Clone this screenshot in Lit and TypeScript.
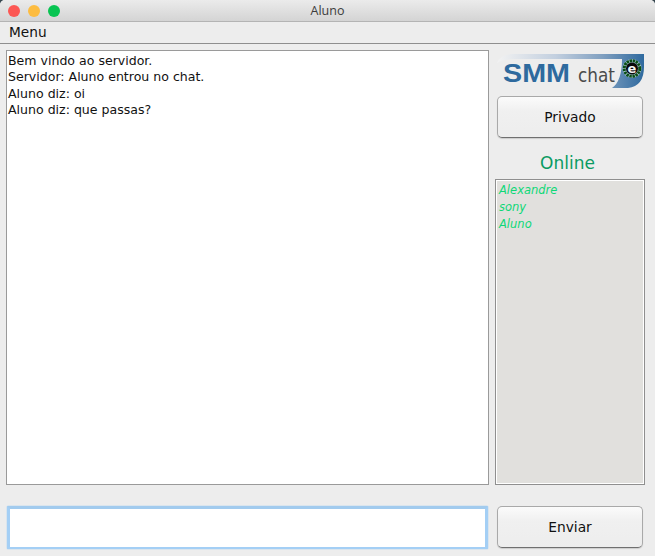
import { LitElement, html, css } from "lit";
import { customElement } from "lit/decorators.js";

@customElement("app-root")
export class AppRoot extends LitElement {
  static styles = css`
    :host {
      display: block;
      width: 655px;
      height: 556px;
      background: #37474f;
      font-family: "DejaVu Sans", "Open Sans", sans-serif;
      font-size: 12.5px;
      color: #111;
      overflow: hidden;
    }
    .window {
      height: 556px;
      display: flex;
      flex-direction: column;
      background: #ededed;
      border-radius: 5px 5px 0 0;
      overflow: hidden;
    }
    .titlebar {
      height: 22px;
      box-sizing: border-box;
      flex: none;
      display: flex;
      align-items: center;
      position: relative;
      padding-left: 8px;
      gap: 8px;
      background: linear-gradient(#ebebeb, #d4d4d4);
      border-bottom: 1px solid #b4b4b4;
    }
    .light { width: 12px; height: 12px; border-radius: 50%; }
    .red { background: #fc5753; }
    .yellow { background: #fdbc40; }
    .green { background: #08c452; }
    .title {
      position: absolute;
      left: 0;
      right: 0;
      text-align: center;
      font-family: "Open Sans", "DejaVu Sans", sans-serif;
      font-size: 12.5px;
      color: #3c3c3c;
    }
    .menubar {
      height: 22px;
      box-sizing: border-box;
      flex: none;
      padding: 2px 0 0 9px;
      font-size: 13.7px;
      line-height: 17px;
      border-bottom: 1px solid #8e8e8e;
    }
    .main {
      flex: none;
      display: grid;
      grid-template-columns: 483px 150px;
      column-gap: 6px;
      padding: 6px 0 0 6px;
      height: 436px;
      box-sizing: border-box;
    }
    .log {
      border: 1px solid #9a9a9a;
      background: #fff;
      padding: 1.5px 1px;
      line-height: 16.5px;
      box-sizing: border-box;
      height: 435px;
      font-size: 12.55px;
    }
    .side {
      display: flex;
      flex-direction: column;
      align-items: stretch;
    }
    .logo { display: block; width: 148px; height: 36px; margin: 3px 0 0 2px; }
    .btn {
      width: 146px;
      height: 42px;
      box-sizing: border-box;
      border: 1px solid #a9a9a9;
      border-bottom: 1.5px solid #6f6f6f;
      border-radius: 5px;
      background: linear-gradient(#fbfbfb, #f0f0f0 35%, #ededed);
      font-family: inherit;
      font-size: 13.8px;
      color: #111;
      padding: 0;
      box-shadow: 0 1px 1px rgba(0,0,0,0.14);
    }
    .side .btn { margin: 7px 0 0 2px; }
    .online {
      margin: 14px 5px 0 0;
      text-align: center;
      color: #0a9b63;
      font-size: 17px;
      line-height: 22px;
      height: 21px;
    }
    .list {
      margin-top: 6px;
      flex: 1;
      border: 1px solid #8f8f8f;
      background: #e1e0dd;
      box-shadow: inset 0 0 0 1px #fff;
      padding: 2px 3px;
      color: #0fd877;
      font-style: italic;
      font-size: 11.5px;
      line-height: 17px;
    }
    .bottom {
      flex: none;
      display: grid;
      grid-template-columns: 481px 146px;
      column-gap: 9px;
      padding: 26px 0 0 7px;
      align-items: start;
    }
    .input {
      height: 43px;
      box-sizing: border-box;
      border-style: solid;
      border-width: 3px 3px 2px 3px;
      border-color: #a2cbee #a4cff5 #a4cff5 #a4cff5;
      background: #fff;
      display: block;
      width: 100%;
      padding: 0;
      outline: none;
      border-radius: 1px;
      box-shadow: 0 0 0 0.5px rgba(164, 207, 245, 0.5);
    }
  `;

  render() {
    return html`
      <div class="window">
        <div class="titlebar">
          <span class="light red"></span>
          <span class="light yellow"></span>
          <span class="light green"></span>
          <span class="title">Aluno</span>
        </div>
        <div class="menubar">Menu</div>
        <div class="main">
          <div class="log">
            <div>Bem vindo ao servidor.</div>
            <div>Servidor: Aluno entrou no chat.</div>
            <div>Aluno diz: oi</div>
            <div>Aluno diz: que passas?</div>
          </div>
          <div class="side">
            <svg class="logo" viewBox="0 0 148 36">
              <defs>
                <linearGradient id="sw" x1="0" x2="1" y1="0" y2="0">
                  <stop offset="0" stop-color="#f2f2f2" />
                  <stop offset="0.4" stop-color="#c2cfdf" />
                  <stop offset="0.72" stop-color="#7f9fc0" />
                  <stop offset="1" stop-color="#2f6a9f" />
                </linearGradient>
              </defs>
              <path d="M0 10 Q3 1 16 1 H147 V14 Q147 33 131 35 H115 Q125 28 125 6 H18 Q5 6 0 10 Z" fill="url(#sw)" />
              <text x="6" y="29" font-family="Liberation Sans" font-weight="700" font-size="26" textLength="67" lengthAdjust="spacingAndGlyphs" fill="#2e6a9e">SMM</text>
              <text x="81" y="29" font-family="DejaVu Sans" font-size="19" textLength="37" lengthAdjust="spacingAndGlyphs" fill="#4a4a4a">chat</text>
              <circle cx="135" cy="15.5" r="9.6" fill="#a9c3da" />
              <circle cx="135" cy="15.5" r="7.8" fill="none" stroke="#0a5014" stroke-width="3" stroke-dasharray="2.4 0.7" />
              <circle cx="135" cy="15.5" r="6" fill="#0a0a0a" />
              <text x="135" y="20" text-anchor="middle" font-family="DejaVu Sans" font-weight="700" font-size="13" fill="#f4f4f4">e</text>
            </svg>
            <button class="btn">Privado</button>
            <div class="online">Online</div>
            <div class="list">
              <div>Alexandre</div>
              <div>sony</div>
              <div>Aluno</div>
            </div>
          </div>
        </div>
        <div class="bottom">
          <input class="input" />
          <button class="btn">Enviar</button>
        </div>
      </div>
    `;
  }
}
